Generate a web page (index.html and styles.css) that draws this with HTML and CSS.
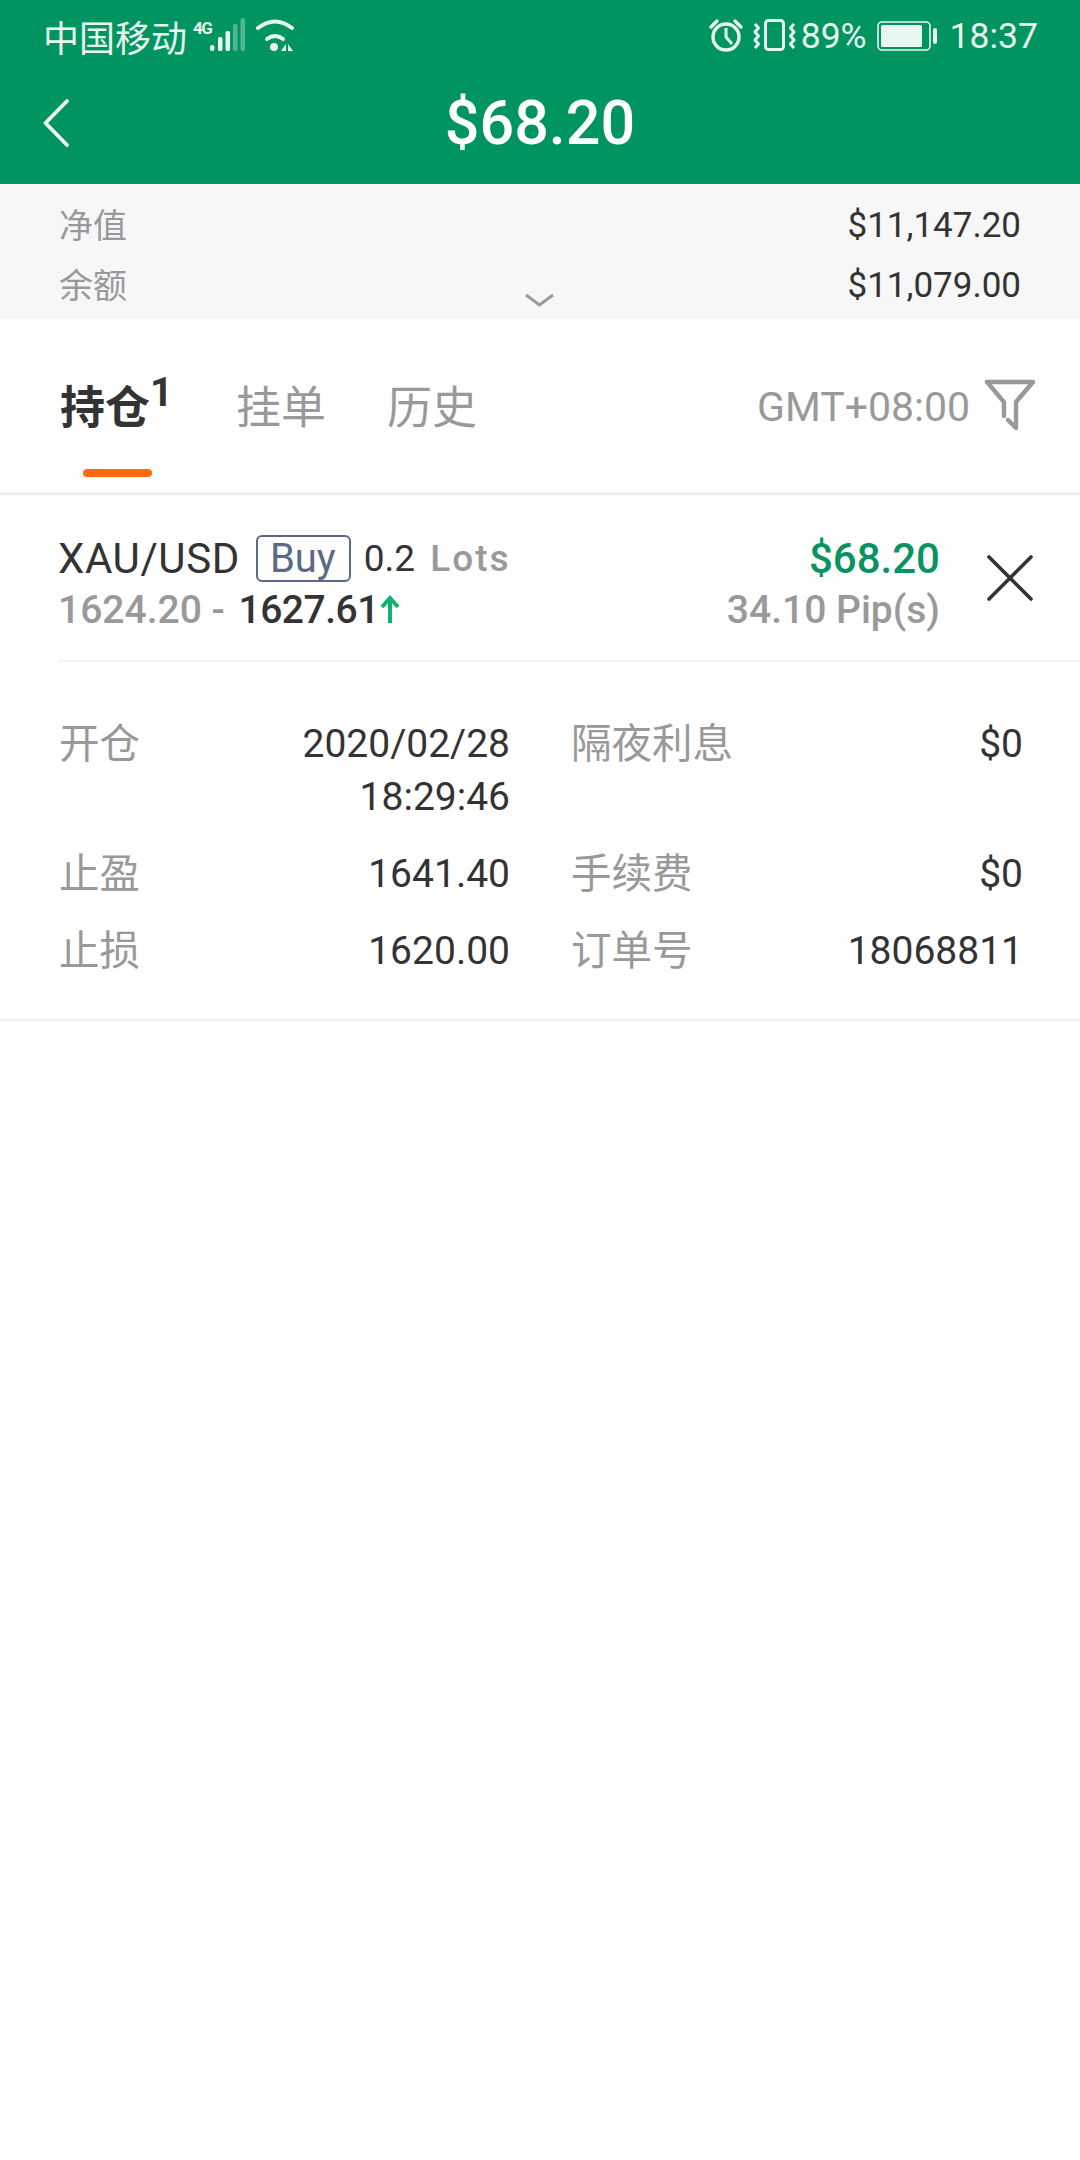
FILE: index.html
```html
<!DOCTYPE html>
<html lang="zh-CN">
<head>
    <meta charset="UTF-8">
    <meta name="viewport" content="width=device-width, initial-scale=1.0">
    <title>$68.20</title>
    <link rel="stylesheet" href="styles.css">
</head>
<body>
    <header class="header">
        <div class="status-bar">
            <div class="status-left">
                <span class="carrier">中国移动</span>
                <span class="net-type">4G</span>
                <svg class="signal" width="37" height="34" viewBox="0 0 37 34">
                    <rect x="1" y="27" width="4.5" height="6" rx="2.2" fill="#e8f6f0"/>
                    <rect x="9" y="19" width="4.5" height="14" rx="1.5" fill="#e8f6f0"/>
                    <rect x="16.5" y="13" width="4.5" height="20" rx="1.5" fill="#e8f6f0"/>
                    <rect x="24" y="6" width="4.5" height="27" rx="2" fill="#e8f6f0" opacity="0.35"/>
                    <rect x="31.5" y="0" width="4.5" height="33" rx="2" fill="#e8f6f0" opacity="0.35"/>
                </svg>
                <svg class="wifi" width="41" height="36" viewBox="0 0 41 36">
                    <path d="M3 10 Q20 -3 37 10" fill="none" stroke="#e8f6f0" stroke-width="4" stroke-linecap="round"/>
                    <path d="M12 21 Q20 15 28 21" fill="none" stroke="#e8f6f0" stroke-width="4" stroke-linecap="round"/>
                    <circle cx="19" cy="29" r="4" fill="#e8f6f0"/>
                    <path d="M31 26 V33 H26 Z M33 26 L38 33 H33 Z" fill="#e8f6f0"/>
                </svg>
            </div>
            <div class="status-right">
                <svg width="36" height="36" viewBox="0 0 36 36">
                    <circle cx="18" cy="19" r="13" fill="none" stroke="#e8f6f0" stroke-width="3.4"/>
                    <path d="M18 10 V19 L24 26" fill="none" stroke="#e8f6f0" stroke-width="3"/>
                    <path d="M3 9 L9 3 M33 9 L27 3" stroke="#e8f6f0" stroke-width="3.4" stroke-linecap="round"/>
                </svg>
                <svg class="vibrate" width="44" height="36" viewBox="0 0 44 36">
                    <rect x="13.5" y="2.5" width="18" height="29" rx="3" fill="none" stroke="#e8f6f0" stroke-width="3"/>
                    <path d="M3 6 L6.5 10 L3 14 L6.5 18 L3 22 L6.5 26 L3 30" fill="none" stroke="#e8f6f0" stroke-width="3" stroke-linejoin="round"/>
                    <path d="M42 6 L38.5 10 L42 14 L38.5 18 L42 22 L38.5 26 L42 30" fill="none" stroke="#e8f6f0" stroke-width="3" stroke-linejoin="round"/>
                </svg>
                <span class="battery-pct">89%</span>
                <svg class="battery" width="61" height="30" viewBox="0 0 61 30">
                    <rect x="1" y="1" width="52" height="28" rx="4" fill="none" stroke="#e8f6f0" stroke-width="1.6"/>
                    <rect x="4" y="4" width="41" height="22" rx="1.5" fill="#e8f6f0"/>
                    <rect x="56" y="7" width="4" height="16" rx="2" fill="#e8f6f0"/>
                </svg>
                <span class="clock">18:37</span>
            </div>
        </div>
        <div class="nav-bar">
            <svg class="back" width="26" height="48" viewBox="0 0 26 48">
                <path d="M24 2 L2.5 24 L24 46" fill="none" stroke="#f2faf6" stroke-width="3.8" stroke-linecap="round" stroke-linejoin="round"/>
            </svg>
            <h1 class="title">$68.20</h1>
        </div>
    </header>

    <section class="summary">
        <div class="summary-row"><span class="summary-label">净值</span><span class="summary-value">$11,147.20</span></div>
        <div class="summary-row"><span class="summary-label">余额</span><span class="summary-value">$11,079.00</span></div>
        <svg class="chevron" width="30" height="16" viewBox="0 0 30 16">
            <path d="M2 3 L15.5 13 L29 3" fill="none" stroke="#999" stroke-width="3"/>
        </svg>
    </section>

    <nav class="tabs">
        <div class="tab active">
            <div class="tab-label">持仓<sup class="tab-count">1</sup></div>
            <div class="tab-line"></div>
        </div>
        <div class="tab"><div class="tab-label">挂单</div></div>
        <div class="tab"><div class="tab-label">历史</div></div>
        <div class="tab-right">
            <span class="timezone">GMT+08:00</span>
            <svg class="filter" width="52" height="52" viewBox="0 0 52 52">
                <path d="M3 3 H49 L32 23 V49 L24 41" fill="none" stroke="#999" stroke-width="4.4" stroke-linejoin="round" stroke-linecap="round"/>
                <path d="M3 3 L20 23 V37" fill="none" stroke="#999" stroke-width="4.4" stroke-linecap="round"/>
            </svg>
        </div>
    </nav>

    <section class="order">
        <div class="order-left">
            <div class="order-line">
                <span class="symbol">XAU/USD</span>
                <span class="side">Buy</span>
                <span class="lots">0.2</span>
                <span class="muted lots-unit">Lots</span>
            </div>
            <div class="order-line order-prices">
                <span class="muted">1624.20 - </span><span class="close-price">1627.61</span>
                <svg class="arrow" width="20" height="30" viewBox="0 0 20 30">
                    <path d="M10 28 V4 M2 12 L10 3 L18 12" fill="none" stroke="#0fb270" stroke-width="4"/>
                </svg>
            </div>
        </div>
        <div class="order-right">
            <div class="order-line profit">$68.20</div>
            <div class="order-line muted pips">34.10 Pip(s)</div>
        </div>
        <svg class="close" width="46" height="46" viewBox="0 0 46 46">
            <path d="M2 2 L44 44 M44 2 L2 44" stroke="#333" stroke-width="3.6" stroke-linecap="round"/>
        </svg>
    </section>

    <section class="details">
        <div class="detail"><span class="detail-label">开仓</span><span class="detail-value">2020/02/28<br>18:29:46</span></div>
        <div class="detail"><span class="detail-label">隔夜利息</span><span class="detail-value">$0</span></div>
        <div class="detail"><span class="detail-label">止盈</span><span class="detail-value">1641.40</span></div>
        <div class="detail"><span class="detail-label">手续费</span><span class="detail-value">$0</span></div>
        <div class="detail"><span class="detail-label">止损</span><span class="detail-value">1620.00</span></div>
        <div class="detail"><span class="detail-label">订单号</span><span class="detail-value">18068811</span></div>
    </section>
</body>
</html>
```

FILE: styles.css
```css
body {
    margin: 0;
    background-color: #fff;
    color: #333;
    font-family: Roboto, "Noto Sans CJK SC", sans-serif;
}

.header {
    height: 184px;
    background-color: #009560;
}

.status-bar {
    display: flex;
    justify-content: space-between;
    align-items: center;
    height: 62px;
    padding: 10px 42px 0 43px;
    box-sizing: border-box;
    color: #e8f6f0;
    font-size: 35.5px;
}

.status-left, .status-right {
    display: flex;
    align-items: center;
}

.carrier {
    font-size: 36px;
}

.net-type {
    font-size: 17px;
    font-weight: 700;
    letter-spacing: -1.5px;
    margin: -16px 0 0 6px;
}

.signal {
    margin: -2px 0 0 -2px;
}

.wifi {
    margin-left: 9px;
}

.status-right svg:first-child {
    margin-right: 1px;
}

.vibrate {
    margin-left: 7px;
}

.battery-pct {
    margin-left: 5px;
}

.battery {
    margin-left: 10px;
}

.clock {
    margin-left: 12px;
}

.nav-bar {
    display: grid;
    grid-template-columns: 1fr auto 1fr;
    align-items: center;
    height: 122px;
    padding-left: 43px;
    padding-right: 43px;
}

.title {
    margin: 0;
    color: #fff;
    font-size: 61px;
    font-weight: 500;
    line-height: 70px;
}

.summary {
    position: relative;
    height: 135px;
    padding: 11px 59px 0 59px;
    box-sizing: border-box;
    background-color: #f7f7f7;
}

.summary-row {
    display: flex;
    justify-content: space-between;
    align-items: center;
    height: 60px;
}

.summary-label {
    margin-top: -4px;
    color: #999;
    font-size: 34px;
}

.summary-value {
    font-size: 35px;
}

.chevron {
    position: absolute;
    left: 524px;
    bottom: 11px;
}

.tabs {
    display: flex;
    align-items: flex-start;
    height: 176px;
    padding: 61px 44px 0 60px;
    box-sizing: border-box;
    border-bottom: 3px solid #f0f0f0;
}

.tab {
    margin-right: 61px;
}

.tab-label {
    color: #999;
    font-size: 45px;
    line-height: 58px;
    white-space: nowrap;
}

.tab.active .tab-label {
    color: #333;
    font-weight: 700;
}

.tab.active {
    margin-right: 63px;
}

.tab-count {
    font-family: Roboto, sans-serif;
    font-size: 40px;
    line-height: 0;
    vertical-align: 18px;
}

.tab-line {
    width: 69px;
    height: 8px;
    margin: 31px 0 0 23px;
    border-radius: 4px;
    background-color: #ff6a0c;
}

.tab-right {
    display: flex;
    align-items: center;
    margin: -2px 0 0 auto;
    height: 58px;
    color: #999;
    font-size: 41px;
}

.filter {
    margin: -4px 0 0 14px;
}

.order {
    display: flex;
    align-items: center;
    height: 167px;
    margin-left: 58px;
    padding-right: 47px;
    box-sizing: border-box;
    border-bottom: 2px solid #f2f2f2;
}

.order-left {
    flex: 1;
    padding-top: 13px;
}

.order-right {
    padding-top: 13px;
    text-align: right;
}

.order-line {
    display: flex;
    align-items: center;
    height: 52px;
    font-size: 40px;
    white-space: pre;
}

.order-right .order-line {
    justify-content: flex-end;
}

.muted {
    color: #999;
}

.symbol {
    font-size: 42px;
    letter-spacing: 0.6px;
}

.side {
    margin-left: 16px;
    padding: 0 13px 0 12px;
    border: 2px solid #5a6a85;
    border-radius: 6px;
    color: #5a6a85;
    font-size: 40px;
    line-height: 43px;
}

.lots {
    margin-left: 13px;
    font-size: 37px;
}

.lots-unit {
    margin-left: 15px;
    font-size: 37px;
    font-weight: 500;
    letter-spacing: 2px;
}

.order-line.order-prices, .order-line.pips {
    font-size: 39px;
    font-weight: 500;
}

.close-price {
    margin-left: 4px;
    letter-spacing: -0.5px;
}

.arrow {
    margin-left: 1px;
}

.order-line.profit {
    color: #0a9362;
    font-size: 42px;
    font-weight: 500;
}

.close {
    margin-left: 47px;
}

.details {
    display: grid;
    grid-template-columns: 451px 452px;
    column-gap: 61px;
    row-gap: 24px;
    padding: 56px 0 41px 59px;
    border-bottom: 2px solid #f2f2f2;
}

.detail {
    display: flex;
    justify-content: space-between;
    align-items: flex-start;
    font-size: 39px;
    line-height: 53px;
}

.detail-label {
    color: #999;
    font-size: 40.5px;
}

.detail-value {
    text-align: right;
}
```
